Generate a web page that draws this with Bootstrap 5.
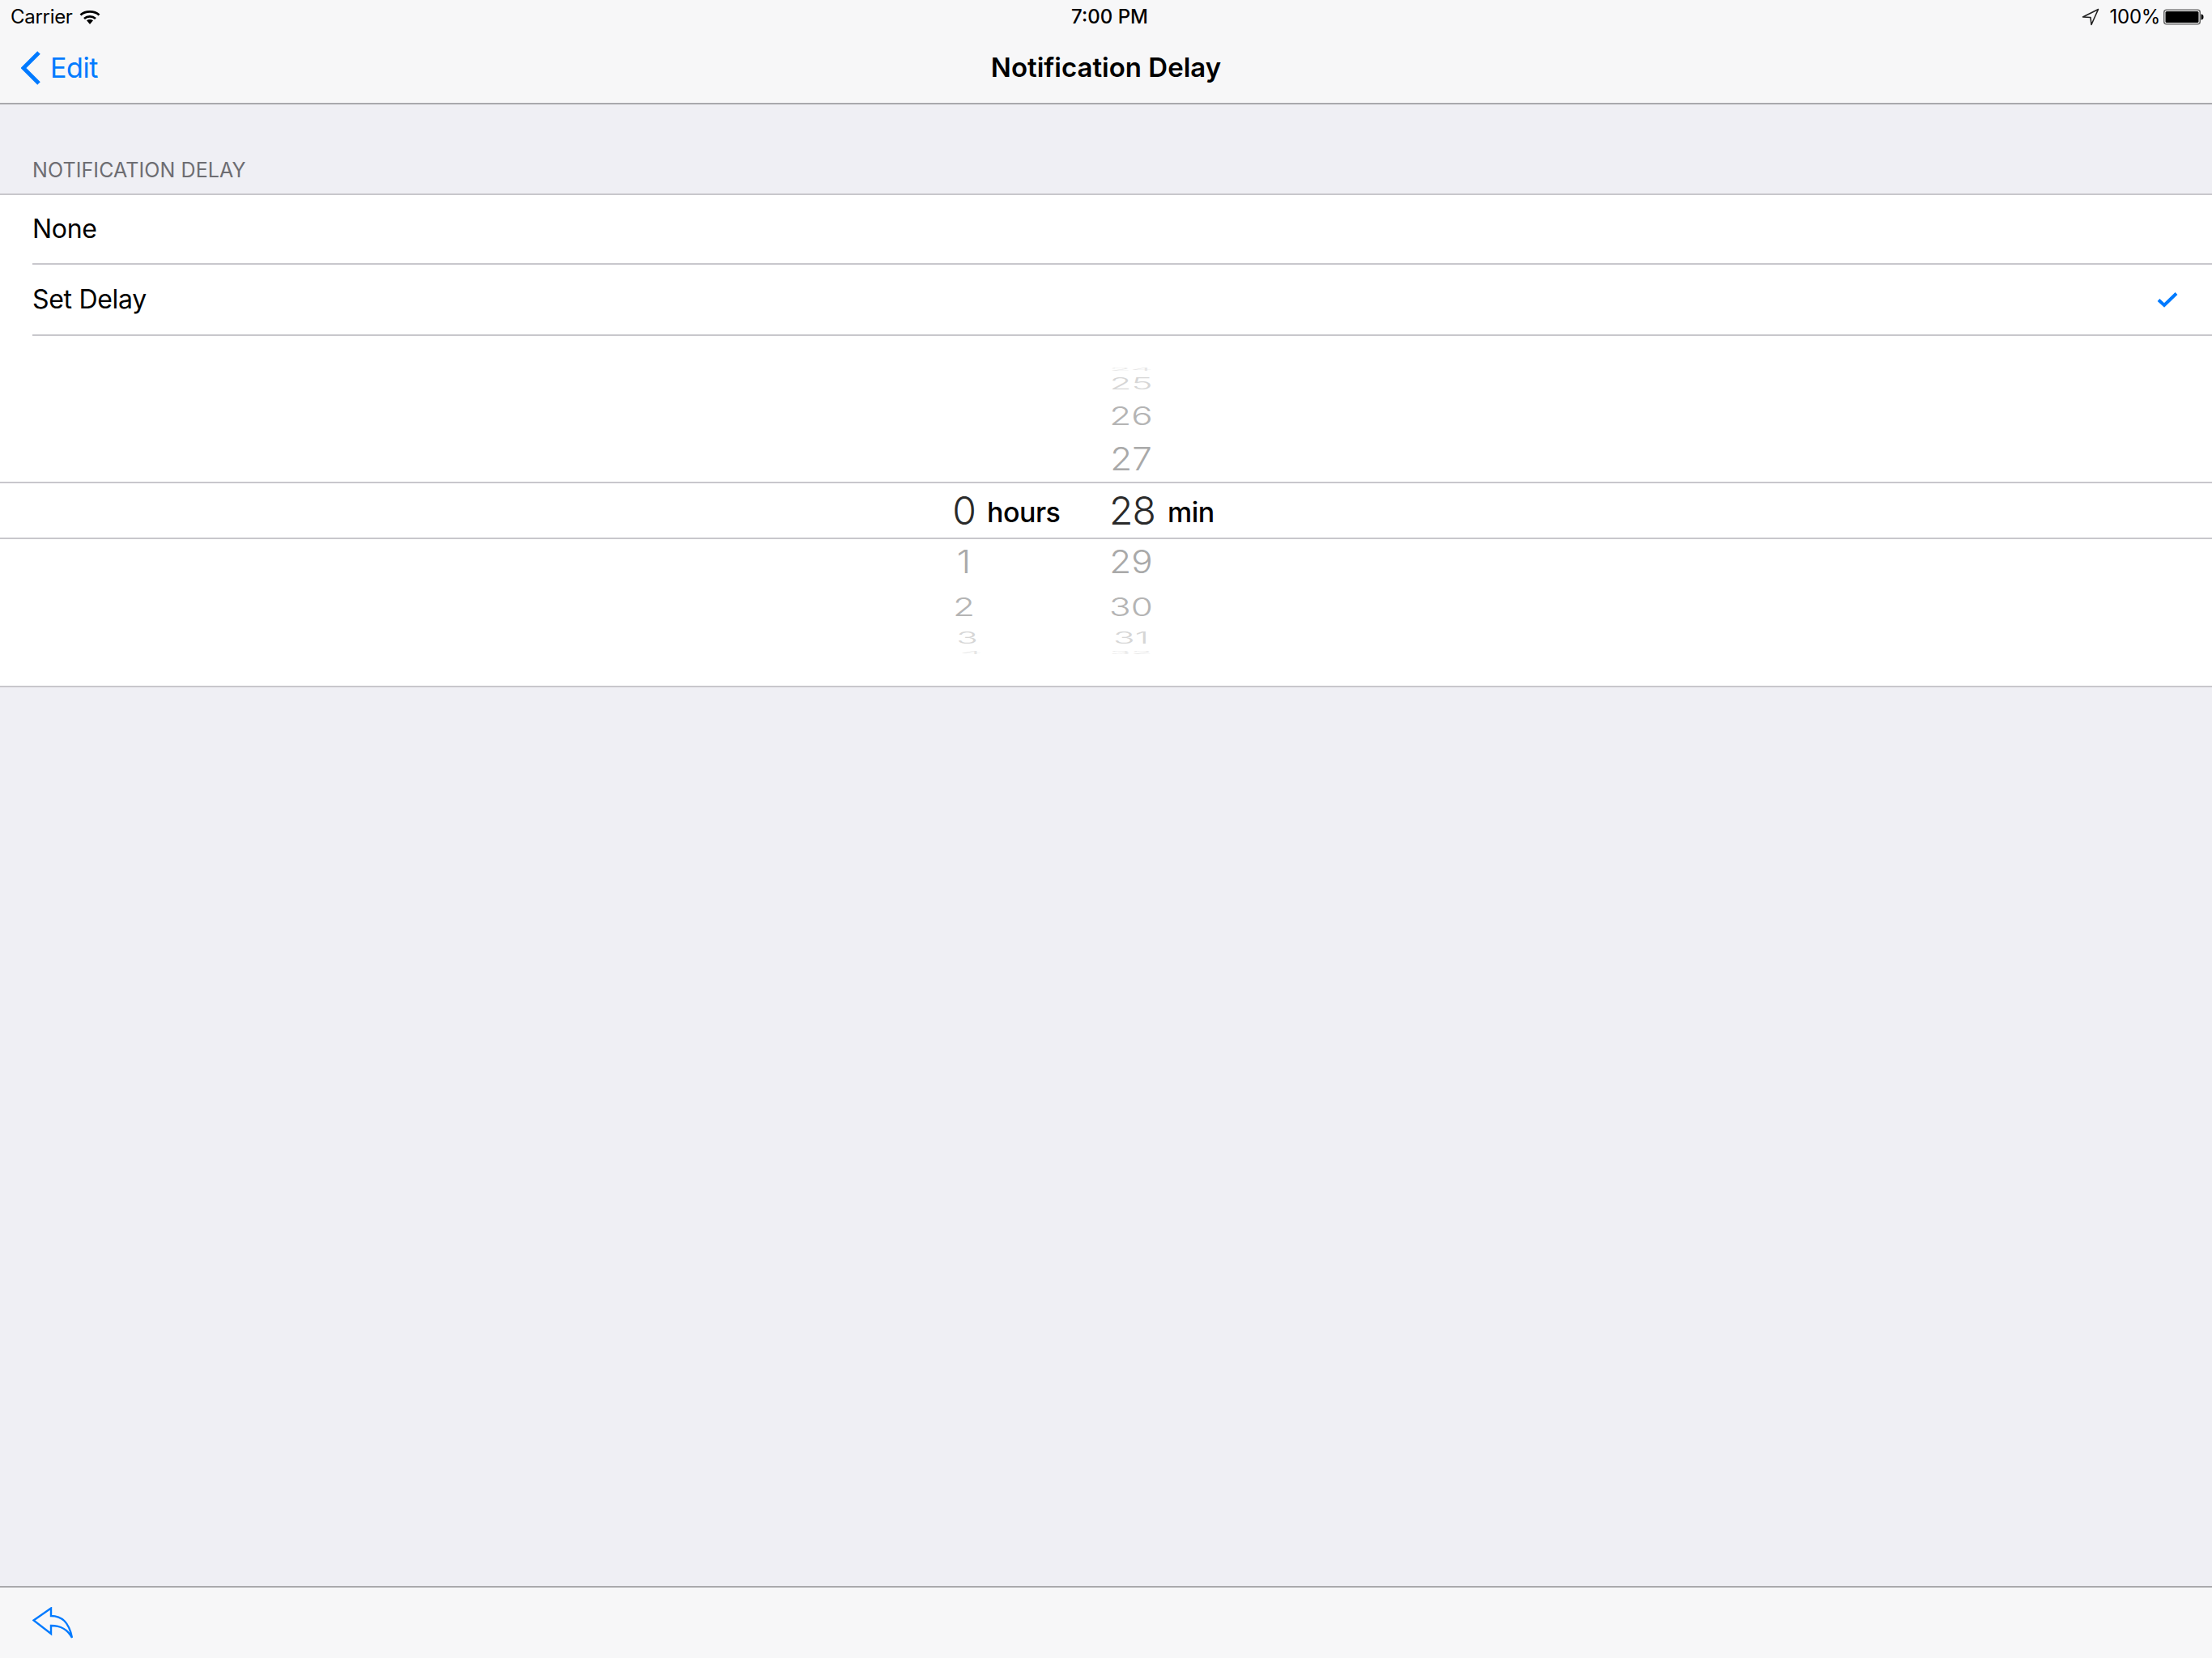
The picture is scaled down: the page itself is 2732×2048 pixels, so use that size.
<!DOCTYPE html>
<html lang="en">
<head>
    <meta charset="UTF-8">
    <meta name="viewport" content="width=device-width, initial-scale=1.0">
    <title>Notification Delay</title>
    <link href="https://cdn.jsdelivr.net/npm/bootstrap@5.3.0/dist/css/bootstrap.min.css" rel="stylesheet">
    <style>
        html, body { height: 100%; }
        body {
            font-family: Inter, "Liberation Sans", sans-serif;
            background: #efeff4;
            color: #000;
            width: 2732px;
            height: 2048px;
            overflow: hidden;
        }
        .bar-top { background: #f7f7f8; height: 129px; border-bottom: 2px solid #a9a9ac; }
        .status-row { height: 40px; padding-top: 2px; font-size: 24px; line-height: 38px; letter-spacing: -0.3px; }
        .side-cell { flex: 1 1 0; }
        .status-left { padding-left: 13px; }
        .status-right { padding-right: 10px; }
        .status-time { font-weight: 500; margin-left: 6px; letter-spacing: 0; }
        .pct-text { margin-left: 13px; }
        .nav-row { height: 87px; }
        .nav-back { color: #007aff; font-size: 34px; letter-spacing: -0.4px; text-decoration: none; padding-left: 26px; padding-top: 2px; }
        .back-text { margin-left: 12px; }
        .nav-title { font-size: 33px; font-weight: 600; letter-spacing: 0; }
        .section-head { height: 110px; padding: 0 0 10px 40px; font-size: 25px; color: #6d6d72; letter-spacing: 0.1px; }
        .table-group { background: #fff; border-top: 2px solid #c8c7cc; border-bottom: 2px solid #c8c7cc; }
        .table-row { padding: 0 0 0 40px; border: 0; background: transparent; color: #000; font-size: 32px; letter-spacing: -0.3px; }
        .row-inner { height: 88px; padding-right: 42px; border-bottom: 2px solid #c8c7cc; }
        .first-row { height: 86px; }
        .wheel-band { padding-left: 1162px; }
        .wheel-top { height: 180px; }
        .wheel-selected { height: 71px; padding-top: 1px; border-top: 2px solid #c8c7cc; border-bottom: 2px solid #c8c7cc; }
        .wheel-bottom { height: 181px; }
        .hours-col { width: 57px; }
        .hours-label { width: 138px; }
        .min-col { width: 80px; }
        .min-label { margin-left: 5px; }
        .wheel-num {
            display: flex; align-items: center; justify-content: center;
            font-size: 44px; font-weight: 300; line-height: 1; white-space: nowrap;
        }
        .num-big { font-size: 48px; color: #2a2a2a; height: 65px; font-weight: 300; letter-spacing: -1px; }
        .num-shift { padding-left: 3px; }
        .unit-text { font-size: 34px; font-weight: 500; letter-spacing: -0.5px; line-height: 66px; padding-top: 3px; }
        .tick-near { height: 56px; color: #a9a9a9; transform: scaleY(0.9); }
        .tick-mid { color: #b4b4b4; transform: scaleY(0.72); }
        .tick-far { color: #d6d6d6; transform: scaleY(0.44); }
        .tick-edge { color: #e6e6e6; transform: scaleY(0.12); }
        .up-mid { height: 52px; }
        .up-far { height: 26px; }
        .up-edge { height: 10px; }
        .dn-mid { height: 54px; }
        .dn-far { height: 24px; }
        .dn-edge { height: 12px; }
        .shift-a { margin-left: 8px; }
        .shift-b { margin-left: 18px; }
        .bar-bottom {
            position: fixed; left: 0; right: 0; bottom: 0; height: 89px;
            background: #f7f7f8; border-top: 2px solid #a9a9ac; padding-left: 40px;
        }
    </style>
</head>
<body>
    <header class="bar-top">
        <div class="status-row d-flex align-items-center">
            <div class="side-cell status-left d-flex align-items-center">
                <span>Carrier</span>
                <svg class="ms-2" width="26" height="18" viewBox="0 0 26 18" fill="none">
                    <path d="M1.5 6.5C7.5 1 18.5 1 24.5 6.5" stroke="#000" stroke-width="2.8"/>
                    <path d="M6 11C10 7.6 16 7.6 20 11" stroke="#000" stroke-width="2.8"/>
                    <path d="M9 13.2C11.4 11.6 14.6 11.6 17 13.2L13 18Z" fill="#000"/>
                </svg>
            </div>
            <div class="status-time">7:00 PM</div>
            <div class="side-cell status-right d-flex align-items-center justify-content-end">
                <svg width="22" height="22" viewBox="0 0 22 22" fill="none">
                    <path d="M20.5 1.5 1.5 11l9.5 0.5L12 20.500Z" stroke="#222" stroke-width="1.6" stroke-linejoin="round"/>
                </svg>
                <span class="pct-text">100%</span>
                <svg class="ms-1" width="50" height="20" viewBox="0 0 50 20">
                    <rect x="0.75" y="1.25" width="44.5" height="17.5" rx="3" fill="#fff" stroke="#666" stroke-width="1.5"/>
                    <rect x="2.5" y="3" width="41" height="14" rx="1.5" fill="#000"/>
                    <path d="M46.500 6.500c2 0 3 1.500 3 3.500s-1 3.500-3 3.500Z" fill="#000"/>
                </svg>
            </div>
        </div>
        <nav class="nav-row d-flex align-items-center">
            <div class="side-cell">
                <a class="nav-back d-inline-flex align-items-center" href="#">
                    <svg width="24" height="42" viewBox="0 0 24 42" fill="none">
                        <path d="M22 2 3 21l19 19" stroke="#007aff" stroke-width="5"/>
                    </svg>
                    <span class="back-text">Edit</span>
                </a>
            </div>
            <div class="nav-title">Notification Delay</div>
            <div class="side-cell"></div>
        </nav>
    </header>

    <div class="section-head d-flex align-items-end">NOTIFICATION DELAY</div>

    <section class="table-group">
        <ul class="list-group list-group-flush">
            <li class="list-group-item table-row">
                <div class="row-inner first-row d-flex align-items-center">None</div>
            </li>
            <li class="list-group-item table-row">
                <div class="row-inner d-flex align-items-center justify-content-between">
                    <span>Set Delay</span>
                    <svg width="26" height="20" viewBox="0 0 26 20" fill="none">
                        <path d="M2 10.500 9 17 24 2.500" stroke="#007aff" stroke-width="4"/>
                    </svg>
                </div>
            </li>
        </ul>

        <div class="wheel-band wheel-top d-flex align-items-end">
            <div class="hours-col"></div>
            <div class="hours-label"></div>
            <div class="min-col">
                <div class="wheel-num tick-edge up-edge">24</div>
                <div class="wheel-num tick-far up-far">25</div>
                <div class="wheel-num tick-mid up-mid">26</div>
                <div class="wheel-num tick-near">27</div>
            </div>
        </div>
        <div class="wheel-band wheel-selected d-flex align-items-center">
            <div class="hours-col wheel-num num-big">0</div>
            <div class="hours-label unit-text">hours</div>
            <div class="min-col wheel-num num-big num-shift">28</div>
            <div class="min-label unit-text">min</div>
        </div>
        <div class="wheel-band wheel-bottom d-flex align-items-start">
            <div class="hours-col">
                <div class="wheel-num tick-near">1</div>
                <div class="wheel-num tick-mid dn-mid">2</div>
                <div class="wheel-num tick-far dn-far shift-a">3</div>
                <div class="wheel-num tick-edge dn-edge shift-b">4</div>
            </div>
            <div class="hours-label"></div>
            <div class="min-col">
                <div class="wheel-num tick-near">29</div>
                <div class="wheel-num tick-mid dn-mid">30</div>
                <div class="wheel-num tick-far dn-far">31</div>
                <div class="wheel-num tick-edge dn-edge">32</div>
            </div>
        </div>
    </section>

    <footer class="bar-bottom d-flex align-items-center">
        <svg width="50" height="40" viewBox="0 0 50 40" fill="none">
            <path d="M1.500 16.500 23 1.500v9.500c13 0 22 7 26 27-6-11-14-15-26-15v10Z" stroke="#007aff" stroke-width="2.400" stroke-linejoin="miter"/>
        </svg>
    </footer>

    <script src="https://cdn.jsdelivr.net/npm/bootstrap@5.3.0/dist/js/bootstrap.bundle.min.js"></script>
</body>
</html>
